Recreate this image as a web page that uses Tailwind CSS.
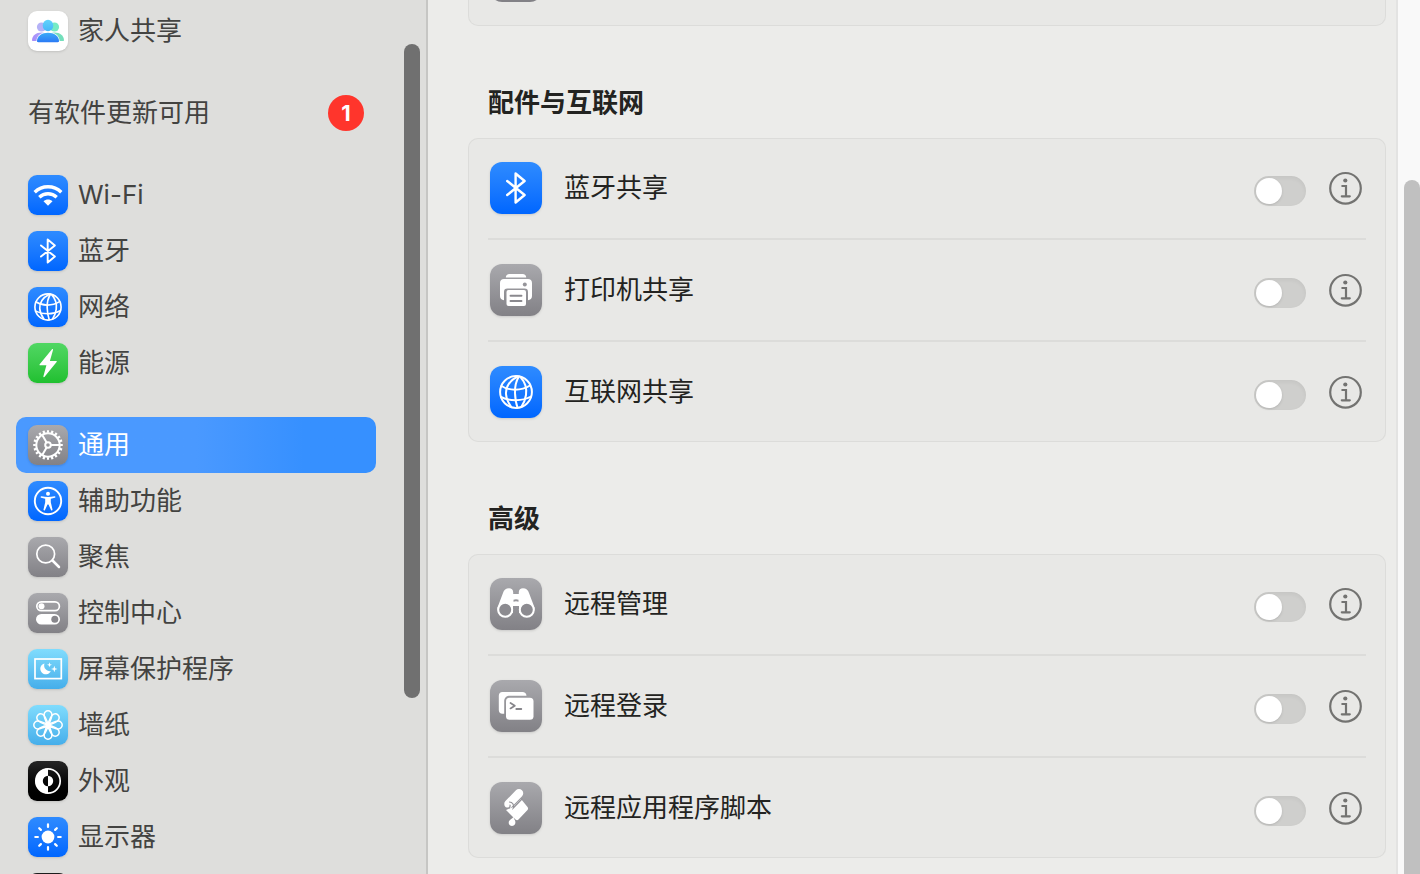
<!DOCTYPE html>
<html lang="zh-CN">
<head>
    <meta charset="UTF-8">
    <meta name="viewport" content="width=device-width, initial-scale=1.0">
    <title>共享</title>
    <script src="https://cdn.jsdelivr.net/npm/@tailwindcss/browser@4"></script>
</head>
<body class="h-screen flex overflow-hidden bg-[#ececea] text-[26px] leading-8 font-['Inter','Noto_Sans_CJK_SC',sans-serif]">

    <!-- Shared icon shapes -->
    <svg class="hidden">
        <symbol id="bluetooth" viewBox="0 0 20 32" fill="none" stroke="currentColor" stroke-width="2.400" stroke-linecap="round" stroke-linejoin="round">
            <path d="M1.200 9 18.600 23 9.600 30.500v-29l9 7.500L1.200 23"/>
        </symbol>
        <symbol id="globe" viewBox="0 0 34 34" fill="none" stroke="currentColor" stroke-width="2" stroke-linecap="round">
            <circle cx="17" cy="17" r="15.900"/>
            <path d="M18.700 1.500C10 6 6.600 12 7 19c.2 5 2 8.500 5 12.500"/>
            <path d="M20 1.500C17 6 15.800 12 16 18c.2 6 .8 10 2.500 14.500"/>
            <path d="M21.500 2C26 7 28 13 27 20c-.8 5-2 8-4.500 11.500"/>
            <path d="M2.500 11c7 4.500 19 5.500 28.500-.5"/>
            <path d="M2 22c8.500 4.200 21 4.500 30-.5"/>
        </symbol>
        <symbol id="info" viewBox="0 0 34 34" fill="none" stroke="currentColor" stroke-width="2.200">
            <circle cx="16.500" cy="17.300" r="15.300"/>
            <circle cx="16.300" cy="9.500" r="2.100" fill="currentColor" stroke="none"/>
            <path d="M13.300 15h3.700v10M12.800 25.300h8" stroke-linecap="round"/>
        </symbol>
    </svg>

    <!-- Sidebar -->
    <aside class="relative w-[428px] shrink-0 overflow-hidden bg-[#dededc] border-r-2 border-[#c6c6c4] pt-[3px] pl-4 pr-[50px]">
        <nav class="flex flex-col gap-[26px] text-[#434341]">
            <a href="#" class="flex h-14 items-center gap-2.5 px-3">
                <span class="size-10 shrink-0 rounded-[9px] bg-white shadow-sm">
                    <svg viewBox="0 0 40 40">
                        <defs>
                            <linearGradient id="fam-l" x1="0" x2="1"><stop stop-color="#a78bfa"/><stop offset="1" stop-color="#b4b5f5"/></linearGradient>
                            <linearGradient id="fam-h" y2="1" x2="0"><stop stop-color="#62d3fa"/><stop offset="1" stop-color="#45b6f9"/></linearGradient>
                            <linearGradient id="fam-b" y2="1" x2="0"><stop stop-color="#3cabf8"/><stop offset="1" stop-color="#2b7af5"/></linearGradient>
                        </defs>
                        <circle cx="13.500" cy="16" r="4.600" fill="#b5b2f7"/>
                        <path d="M4 29.500c0-5 4-8 9.500-8 3 0 5 1 6.500 3V30H4.800c-.5 0-.8-.2-.8-.5z" fill="url(#fam-l)"/>
                        <circle cx="26.500" cy="16" r="4.600" fill="#76ebc4"/>
                        <path d="M36 29.500c0-5-4-8-9.500-8-3 0-5 1-6.500 3V30h15.200c.5 0 .8-.2.800-.5z" fill="#73dfbb"/>
                        <path d="M8.400 30.500c0-6 5-9.400 11.600-9.400s11.600 3.400 11.600 9.400z" fill="#fff"/>
                        <path d="M9 30c0-5 5-8.300 11-8.300S31 25 31 30c0 .8-.5 1.200-1.300 1.200H10.300C9.500 31.200 9 30.800 9 30z" fill="url(#fam-b)"/>
                        <ellipse cx="20" cy="14.500" rx="5.300" ry="5.800" fill="url(#fam-h)"/>
                    </svg>
                </span>
                家人共享
            </a>

            <a href="#" class="flex h-14 items-center justify-between px-3">
                有软件更新可用
                <span class="flex size-9 items-center justify-center rounded-full bg-[#ff352c] text-[22px] font-bold text-white">1</span>
            </a>

            <div>
                <a href="#" class="flex h-14 items-center gap-2.5 px-3">
                    <span class="size-10 shrink-0 rounded-[9px] bg-linear-to-b from-[#2e8bff] to-[#0066ff] text-white shadow-sm">
                        <svg viewBox="0 0 40 40" fill="none" stroke="currentColor" stroke-width="3.400">
                            <path d="M6.700 17.200c7.500-7.300 19.100-7.300 26.600 0"/>
                            <path d="M11.300 22.200c4.900-4.600 12.500-4.600 17.400 0"/>
                            <path d="m20 30.800-4.500-4.500c2.500-2.300 6.500-2.300 9 0z" fill="currentColor" stroke="none"/>
                        </svg>
                    </span>
                    Wi-Fi
                </a>
                <a href="#" class="flex h-14 items-center gap-2.5 px-3">
                    <span class="flex size-10 shrink-0 items-center justify-center rounded-[9px] bg-linear-to-b from-[#2e8bff] to-[#0066ff] text-white shadow-sm">
                        <svg class="h-[26px] w-4"><use href="#bluetooth"/></svg>
                    </span>
                    蓝牙
                </a>
                <a href="#" class="flex h-14 items-center gap-2.5 px-3">
                    <span class="flex size-10 shrink-0 items-center justify-center rounded-[9px] bg-linear-to-b from-[#2e8bff] to-[#0066ff] text-white shadow-sm">
                        <svg class="size-7"><use href="#globe"/></svg>
                    </span>
                    网络
                </a>
                <a href="#" class="flex h-14 items-center gap-2.5 px-3">
                    <span class="size-10 shrink-0 rounded-[9px] bg-linear-to-b from-[#50d763] to-[#1fc02f] text-white shadow-sm">
                        <svg viewBox="0 0 40 40" fill="currentColor">
                            <path d="M23.800 6.400 11.700 21.200c-.4.500-.1 1 .4 1h6.300l-3 11c-.2.900.6 1.300 1.200.6l12-14.800c.4-.5.1-1-.4-1h-6.300l3.100-11c.2-.9-.6-1.300-1.200-.6z"/>
                        </svg>
                    </span>
                    能源
                </a>
            </div>

            <div>
                <a href="#" aria-current="page" class="flex h-14 items-center gap-2.5 rounded-[10px] bg-linear-to-r from-[#4a99ff] from-50% to-[#3690ff] to-80% px-3 text-white">
                    <span class="size-10 shrink-0 rounded-[9px] bg-linear-to-b from-[#a9a9ad] to-[#828186] shadow-sm">
                        <svg viewBox="0 0 40 40" fill="none" stroke="currentColor" stroke-width="2">
                            <circle cx="20" cy="20" r="13.500" stroke-width="2.600" pathLength="80" stroke-dasharray="2 2" stroke-dashoffset="1"/>
                            <circle cx="20" cy="20" r="11.700"/>
                            <circle cx="20" cy="20" r="2.800"/>
                            <path d="M22.800 20h9M18.600 17.600l-4.500-7.800M18.600 22.400l-4.500 7.800"/>
                        </svg>
                    </span>
                    通用
                </a>
                <a href="#" class="flex h-14 items-center gap-2.5 px-3">
                    <span class="size-10 shrink-0 rounded-[9px] bg-linear-to-b from-[#2e8bff] to-[#0066ff] text-white shadow-sm">
                        <svg viewBox="0 0 40 40" fill="currentColor">
                            <circle cx="20" cy="20" r="13.200" fill="none" stroke="currentColor" stroke-width="1.900"/>
                            <circle cx="20" cy="12.800" r="2"/>
                            <path d="M13.400 15.200c4.400 1 8.800 1 13.200 0 .9-.1 1.100 1.300.3 1.500l-4.100 1v3.600l1.700 7.200c.2 1-1.200 1.400-1.500.4L20.500 23.500h-1L17 28.900c-.3 1-1.700.6-1.500-.4l1.700-7.200v-3.600l-4.100-1c-.8-.2-.6-1.600.3-1.500z"/>
                        </svg>
                    </span>
                    辅助功能
                </a>
                <a href="#" class="flex h-14 items-center gap-2.5 px-3">
                    <span class="size-10 shrink-0 rounded-[9px] bg-linear-to-b from-[#a9a9ad] to-[#828186] text-white shadow-sm">
                        <svg viewBox="0 0 40 40" fill="none" stroke="currentColor" stroke-linecap="round">
                            <circle cx="17.700" cy="17" r="8.900" stroke-width="1.700"/>
                            <path d="m24.500 23.500 6.500 6.500" stroke-width="2.500"/>
                        </svg>
                    </span>
                    聚焦
                </a>
                <a href="#" class="flex h-14 items-center gap-2.5 px-3">
                    <span class="size-10 shrink-0 rounded-[9px] bg-linear-to-b from-[#a9a9ad] to-[#828186] text-white shadow-sm">
                        <svg viewBox="0 0 40 40" fill="currentColor">
                            <rect x="8.800" y="8.800" width="22.600" height="8.800" rx="4.400" fill="none" stroke="currentColor" stroke-width="1.700"/>
                            <circle cx="13.500" cy="13.200" r="3"/>
                            <rect x="8" y="21" width="24" height="10.600" rx="5.300"/>
                            <circle cx="26.800" cy="26.300" r="3.500" fill="#88878c"/>
                        </svg>
                    </span>
                    控制中心
                </a>
                <a href="#" class="flex h-14 items-center gap-2.5 px-3">
                    <span class="size-10 shrink-0 rounded-[9px] bg-linear-to-b from-[#80dcfd] to-[#45aeea] text-white shadow-sm">
                        <svg viewBox="0 0 40 40" fill="currentColor">
                            <rect x="7" y="10" width="26.300" height="19.600" fill="none" stroke="currentColor" stroke-width="1.700"/>
                            <path d="M16.500 14.500a5.500 5.500 0 1 0 6.300 7.600 5.700 5.700 0 0 1-6.300-7.600z"/>
                            <path d="m21.500 13.300.6 1.900 1.900.6-1.900.6-.6 1.900-.6-1.900-1.900-.6 1.900-.6zM26.300 16.700l.8 2.500 2.500.8-2.500.8-.8 2.500-.8-2.500-2.500-.8 2.500-.8z"/>
                        </svg>
                    </span>
                    屏幕保护程序
                </a>
                <a href="#" class="flex h-14 items-center gap-2.5 px-3">
                    <span class="size-10 shrink-0 rounded-[9px] bg-linear-to-b from-[#80dcfd] to-[#45aeea] text-white shadow-sm">
                        <svg viewBox="-20 -20 40 40" fill="none" stroke="currentColor" stroke-width="1.500">
                            <defs><path id="petal" d="M.6 2C0-1-.8-4.500-2.600-7.400a3.900 3.900 0 1 1 5.200 0C.8-4.500 0-1-.6 2"/></defs>
                            <use href="#petal"/>
                            <use href="#petal" transform="rotate(45)"/>
                            <use href="#petal" transform="rotate(90)"/>
                            <use href="#petal" transform="rotate(135)"/>
                            <use href="#petal" transform="rotate(180)"/>
                            <use href="#petal" transform="rotate(225)"/>
                            <use href="#petal" transform="rotate(270)"/>
                            <use href="#petal" transform="rotate(315)"/>
                        </svg>
                    </span>
                    墙纸
                </a>
                <a href="#" class="flex h-14 items-center gap-2.5 px-3">
                    <span class="size-10 shrink-0 rounded-[9px] bg-linear-to-b from-[#262626] to-black text-white shadow-sm">
                        <svg viewBox="0 0 40 40" fill="currentColor">
                            <circle cx="20" cy="20" r="12.200" fill="none" stroke="currentColor" stroke-width="1.700"/>
                            <path d="M20 7.500a12.500 12.500 0 0 0 0 25v-7.300a5.200 5.200 0 0 1 0-10.400z"/>
                            <path d="M20 14.800a5.200 5.200 0 0 1 0 10.400z"/>
                        </svg>
                    </span>
                    外观
                </a>
                <a href="#" class="flex h-14 items-center gap-2.5 px-3">
                    <span class="size-10 shrink-0 rounded-[9px] bg-linear-to-b from-[#2e8bff] to-[#0066ff] text-white shadow-sm">
                        <svg viewBox="0 0 40 40" fill="none" stroke="currentColor" stroke-width="2.200" stroke-linecap="round">
                            <circle cx="20" cy="20" r="6.400" fill="currentColor" stroke="none"/>
                            <path d="M20 7.300v2.600M20 30.100v2.600M7.300 20h2.600M30.100 20h2.600M11.200 11.200l1.700 1.700M27.100 27.100l1.700 1.700M11.200 28.800l1.700-1.700M27.100 12.900l1.700-1.700"/>
                        </svg>
                    </span>
                    显示器
                </a>
                <a href="#" aria-label="更多" class="flex h-14 items-center px-3">
                    <span class="size-10 shrink-0 rounded-[9px] bg-[#1c1c1c]"></span>
                </a>
            </div>
        </nav>
        <div class="absolute top-11 right-1.5 h-[654px] w-4 rounded-full bg-[#707070]"></div>
    </aside>

    <!-- Content -->
    <main class="min-w-0 flex-1 overflow-hidden pl-10 pr-2.5 text-[#232321]">
        <div class="h-[26px] overflow-hidden rounded-b-[10px] border border-t-0 border-[#dcdcda] bg-[#e8e8e6] px-[21px]">
            <div class="-mt-[50px] size-[52px] rounded-xl bg-[#828186]"></div>
        </div>

        <h2 class="mt-[61px] mb-[19px] px-5 font-bold">配件与互联网</h2>
        <section class="divide-y-2 divide-[#dcdcda] rounded-[10px] bg-[#e8e8e6] px-5 inset-ring inset-ring-[#dcdcda]">
            <div class="flex h-[102px] items-center pr-[3px] pl-0.5">
                <span class="flex size-[52px] items-center justify-center rounded-xl bg-linear-to-b from-[#2e8bff] to-[#0066ff] text-white shadow-sm">
                    <svg class="h-8 w-5"><use href="#bluetooth"/></svg>
                </span>
                <label for="bluetooth-sharing" class="ml-[22px] flex-1">蓝牙共享</label>
                <input id="bluetooth-sharing" type="checkbox" role="switch" class="relative mt-1.5 h-[30px] w-[52px] appearance-none rounded-full bg-[#cfcfcd] inset-shadow-sm before:absolute before:top-0.5 before:left-0.5 before:size-[26px] before:rounded-full before:bg-white before:shadow-sm checked:bg-[#0a7aff] checked:before:left-6">
                <button type="button" aria-label="蓝牙共享详情" class="ml-[23px] text-[#737371]"><svg class="size-[34px]"><use href="#info"/></svg></button>
            </div>
            <div class="flex h-[102px] items-center pr-[3px] pl-0.5">
                <span class="size-[52px] rounded-xl bg-linear-to-b from-[#a9a9ad] to-[#828186] text-white shadow-sm">
                    <svg viewBox="0 0 52 52" fill="currentColor">
                        <path d="M15.800 13.400c0-2 1.500-3.400 3.500-3.400h13.400c2 0 3.500 1.400 3.500 3.400z"/>
                        <path d="M14 15h24c2.500 0 4 1.600 4 4v13c0 2.400-1.600 4-4 4.200V28c0-2.400-1-3.500-3.500-3.500h-17c-2.500 0-3.500 1.100-3.500 3.500v8.200c-2.400-.2-4-1.800-4-4.200V19c0-2.400 1.500-4 4-4z"/>
                        <circle cx="34.800" cy="20.400" r="2" fill="#96959a"/>
                        <rect x="16.500" y="26" width="19.500" height="16" rx="2"/>
                        <path d="M20.500 31.800h11M20.500 37h11" stroke="#8a898e" stroke-width="1.900" stroke-linecap="round"/>
                    </svg>
                </span>
                <label for="printer-sharing" class="ml-[22px] flex-1">打印机共享</label>
                <input id="printer-sharing" type="checkbox" role="switch" class="relative mt-1.5 h-[30px] w-[52px] appearance-none rounded-full bg-[#cfcfcd] inset-shadow-sm before:absolute before:top-0.5 before:left-0.5 before:size-[26px] before:rounded-full before:bg-white before:shadow-sm checked:bg-[#0a7aff] checked:before:left-6">
                <button type="button" aria-label="打印机共享详情" class="ml-[23px] text-[#737371]"><svg class="size-[34px]"><use href="#info"/></svg></button>
            </div>
            <div class="flex h-[100px] items-center pr-[3px] pl-0.5">
                <span class="flex size-[52px] items-center justify-center rounded-xl bg-linear-to-b from-[#2e8bff] to-[#0066ff] text-white shadow-sm">
                    <svg class="size-[34px]"><use href="#globe"/></svg>
                </span>
                <label for="internet-sharing" class="ml-[22px] flex-1">互联网共享</label>
                <input id="internet-sharing" type="checkbox" role="switch" class="relative mt-1.5 h-[30px] w-[52px] appearance-none rounded-full bg-[#cfcfcd] inset-shadow-sm before:absolute before:top-0.5 before:left-0.5 before:size-[26px] before:rounded-full before:bg-white before:shadow-sm checked:bg-[#0a7aff] checked:before:left-6">
                <button type="button" aria-label="互联网共享详情" class="ml-[23px] text-[#737371]"><svg class="size-[34px]"><use href="#info"/></svg></button>
            </div>
        </section>

        <h2 class="mt-[61px] mb-[19px] px-5 font-bold">高级</h2>
        <section class="divide-y-2 divide-[#dcdcda] rounded-[10px] bg-[#e8e8e6] px-5 inset-ring inset-ring-[#dcdcda]">
            <div class="flex h-[102px] items-center pr-[3px] pl-0.5">
                <span class="size-[52px] rounded-xl bg-linear-to-b from-[#a9a9ad] to-[#828186] text-white shadow-sm">
                    <svg viewBox="0 0 52 52" fill="currentColor">
                        <path d="M7.300 30 13 15c.8-3 3-4.800 6-4.800 2.500 0 4.200 1.600 4.200 4V16h5.600v-1.800c0-2.400 1.700-4 4.200-4 3 0 5.200 1.800 6 4.800l5.700 15-1 5H29v-7h-6v7H8z"/>
                        <path d="M23.500 21.800c1.500-.9 3.500-.9 5 0v2c-1.500-.8-3.500-.8-5 0z" fill="#96959a"/>
                        <circle cx="15.200" cy="31.800" r="7" fill="#8c8b90" stroke="currentColor" stroke-width="2"/>
                        <circle cx="36.800" cy="31.800" r="7" fill="#8c8b90" stroke="currentColor" stroke-width="2"/>
                    </svg>
                </span>
                <label for="remote-management" class="ml-[22px] flex-1">远程管理</label>
                <input id="remote-management" type="checkbox" role="switch" class="relative mt-1.5 h-[30px] w-[52px] appearance-none rounded-full bg-[#cfcfcd] inset-shadow-sm before:absolute before:top-0.5 before:left-0.5 before:size-[26px] before:rounded-full before:bg-white before:shadow-sm checked:bg-[#0a7aff] checked:before:left-6">
                <button type="button" aria-label="远程管理详情" class="ml-[23px] text-[#737371]"><svg class="size-[34px]"><use href="#info"/></svg></button>
            </div>
            <div class="flex h-[102px] items-center pr-[3px] pl-0.5">
                <span class="size-[52px] rounded-xl bg-linear-to-b from-[#a9a9ad] to-[#828186] text-white shadow-sm">
                    <svg viewBox="0 0 52 52" fill="currentColor">
                        <path d="M12.500 12h20c2.200 0 3.800 1.200 4 3.800H20c-3.600 0-5.800 2-5.800 5.700v12.300H12.500c-2.400 0-3.700-1.300-3.700-3.700V15.800c0-2.500 1.300-3.800 3.700-3.800z"/>
                        <rect x="16" y="17.800" width="27.500" height="22" rx="3.600"/>
                        <path d="m20.500 23 4.300 2.700-4.300 2.700M26.300 29h5" fill="none" stroke="#87868b" stroke-width="1.800" stroke-linecap="round" stroke-linejoin="round"/>
                    </svg>
                </span>
                <label for="remote-login" class="ml-[22px] flex-1">远程登录</label>
                <input id="remote-login" type="checkbox" role="switch" class="relative mt-1.5 h-[30px] w-[52px] appearance-none rounded-full bg-[#cfcfcd] inset-shadow-sm before:absolute before:top-0.5 before:left-0.5 before:size-[26px] before:rounded-full before:bg-white before:shadow-sm checked:bg-[#0a7aff] checked:before:left-6">
                <button type="button" aria-label="远程登录详情" class="ml-[23px] text-[#737371]"><svg class="size-[34px]"><use href="#info"/></svg></button>
            </div>
            <div class="flex h-[100px] items-center pr-[3px] pl-0.5">
                <span class="size-[52px] rounded-xl bg-linear-to-b from-[#a9a9ad] to-[#828186] text-white shadow-sm">
                    <svg viewBox="0 0 52 52" fill="currentColor">
                        <path d="m23 25 8-8 6.500 8c.8 1 .8 2.200 0 3.100L28.500 37.600c-1 .8-2 .7-3 0L16 28z"/>
                        <path d="M18.500 22 29 11.200" stroke="currentColor" stroke-width="8.500" stroke-linecap="round"/>
                        <path d="M16.500 26c2.500.5 4-1 3.500-2.800M19.500 20c3 .2 4.600 2.600 3.800 6L32 17" fill="none" stroke="#949398" stroke-width="1.200" stroke-linecap="round"/>
                        <path d="M23.800 34.800c-.2 1.800.5 2.500 1.200 3.700 1.200 2.600-.4 5.500-3 5.500-2.700 0-4-2.700-2.900-4.900.7-1.400 2.400-1.800 4.700-4.300z"/>
                    </svg>
                </span>
                <label for="remote-scripting" class="ml-[22px] flex-1">远程应用程序脚本</label>
                <input id="remote-scripting" type="checkbox" role="switch" class="relative mt-1.5 h-[30px] w-[52px] appearance-none rounded-full bg-[#cfcfcd] inset-shadow-sm before:absolute before:top-0.5 before:left-0.5 before:size-[26px] before:rounded-full before:bg-white before:shadow-sm checked:bg-[#0a7aff] checked:before:left-6">
                <button type="button" aria-label="远程应用程序脚本详情" class="ml-[23px] text-[#737371]"><svg class="size-[34px]"><use href="#info"/></svg></button>
            </div>
        </section>
    </main>

    <!-- Scrollbar track of the content pane -->
    <div class="flex w-6 shrink-0 justify-end border-l-2 border-[#e3e3e2] bg-[#f9f9f9] pt-[180px]">
        <div class="w-4 rounded-t-full bg-[#c0c0c0]"></div>
    </div>

</body>
</html>
